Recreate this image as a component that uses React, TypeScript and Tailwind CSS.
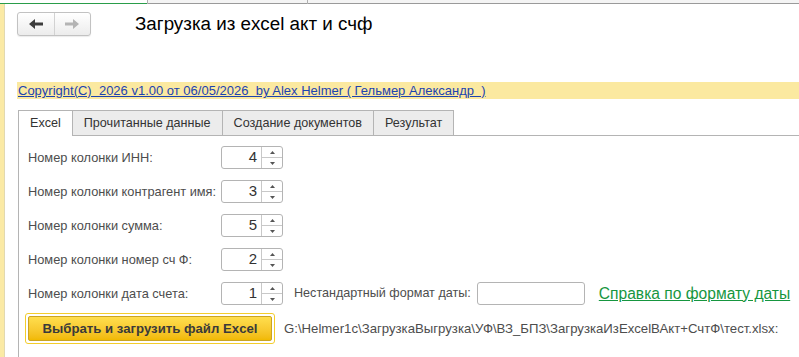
import React from "react";

const rows = [
  { label: "Номер колонки ИНН:", value: "4" },
  { label: "Номер колонки контрагент имя:", value: "3" },
  { label: "Номер колонки сумма:", value: "5" },
  { label: "Номер колонки номер сч Ф:", value: "2" },
];

const tabs = ["Excel", "Прочитанные данные", "Создание документов", "Результат"];

function SpinBox({ value }: { value: string }) {
  return (
    <div className="flex h-[23px] w-[62px] shrink-0 rounded-[3px] border border-[#b4b4b4] bg-white">
      <div className="flex flex-1 items-center justify-end pr-[4px] text-[15px] text-[#333]">{value}</div>
      <div className="flex w-[21px] flex-col border-l border-[#c8c8c8]">
        <div className="flex flex-1 items-center justify-center border-b border-[#c8c8c8]">
          <svg width="5" height="3" viewBox="0 0 5 3"><path d="M2.5 0 L5 3 L0 3 Z" fill="#555" /></svg>
        </div>
        <div className="flex flex-1 items-center justify-center">
          <svg width="5" height="3" viewBox="0 0 5 3"><path d="M0 0 L5 0 L2.5 3 Z" fill="#555" /></svg>
        </div>
      </div>
    </div>
  );
}

export default function App() {
  return (
    <div className="relative flex h-[357px] w-[799px] flex-col overflow-hidden bg-white font-['Liberation_Sans',Arial,sans-serif]">
      {/* верхняя полоска вкладок */}
      <div className="flex h-[4px] shrink-0">
        <div className="w-[147px] border-b border-[#2a9d4a] bg-white" />
        <div className="w-[1px] bg-[#b0b0b0]" />
        <div className="w-[159px] border-b border-[#9a9a9a] bg-[#f4f4f4]" />
        <div className="w-[1px] bg-[#b0b0b0]" />
        <div className="flex-1 border-b border-[#9a9a9a] bg-[#f4f4f4]" />
      </div>

      <div className="flex flex-1">
        <div className="w-[5px] shrink-0 border-r border-[#e2d9b0] bg-[#fbeaa5]" />

        <div className="flex flex-1 flex-col">
          {/* шапка */}
          <div className="ml-[12px] mt-[8px] flex items-center">
            <div className="flex h-[24px] w-[74px] rounded-[3px] border border-[#c2c2c2] bg-gradient-to-b from-white to-[#ececec] shadow-[0_1px_1px_rgba(0,0,0,0.08)]">
              <div className="flex flex-1 items-center justify-center border-r border-[#d2d2d2]">
                <svg width="14" height="10" viewBox="0 0 14 10">
                  <path d="M0 5 L6 0 L6 3.5 L14 3.5 L14 6.5 L6 6.5 L6 10 Z" fill="#3c3c3c" />
                </svg>
              </div>
              <div className="flex flex-1 items-center justify-center">
                <svg width="14" height="10" viewBox="0 0 14 10">
                  <path d="M14 5 L8 0 L8 3.5 L0 3.5 L0 6.5 L8 6.5 L8 10 Z" fill="#b4b4b4" />
                </svg>
              </div>
            </div>
            <div className="ml-[44px] text-[18.8px] leading-[24px] text-black">Загрузка из excel акт и счф</div>
          </div>

          {/* копирайт */}
          <div className="ml-[12px] mt-[46px] flex h-[17px] items-center bg-[#fbe9a0]">
            <span className="whitespace-pre pl-[1px] text-[13px] leading-[17px] text-[#1d43b0] underline">
              Copyright(C)  2026 v1.00 от 06/05/2026  by Alex Helmer ( Гельмер Александр  )
            </span>
          </div>

          {/* вкладки */}
          <div className="ml-[13px] mt-[11px] flex h-[26px]">
            {tabs.map((t, i) => (
              <div
                key={t}
                className={`flex items-center border-t border-r border-[#b4b4b4] px-[11px] text-[12.6px] text-[#333] ${
                  i === 0 ? "border-l bg-white" : "border-b bg-[#ececec]"
                }`}
              >
                {t}
              </div>
            ))}
            <div className="flex-1 border-b border-[#b4b4b4]" />
          </div>

          <div className="ml-[13px] flex flex-1 flex-col border-l border-[#b4b4b4] pl-[9px] pt-[10px]">
            <div className="flex flex-col gap-[11px]">
              {rows.map((r) => (
                <div key={r.label} className="flex h-[23px] items-center">
                  <div className="w-[193px] text-[12.8px] text-[#4d4d4d]">{r.label}</div>
                  <SpinBox value={r.value} />
                </div>
              ))}
              <div className="flex h-[23px] items-center">
                <div className="w-[193px] text-[12.8px] text-[#4d4d4d]">Номер колонки дата счета:</div>
                <SpinBox value="1" />
                <div className="ml-[11px] text-[12.6px] text-[#4d4d4d]">Нестандартный формат даты:</div>
                <div className="ml-[6px] h-[23px] w-[108px] rounded-[3px] border border-[#b4b4b4] bg-white" />
                <span className="ml-[14px] text-[15.6px] text-[#16963f] underline">Справка по формату даты</span>
              </div>
            </div>

            <div className="-ml-[3px] mt-[8px] flex items-center">
              <div className="rounded-[3px] border border-[#f3cd2c] p-[2px]">
                <div className="flex h-[25px] w-[244px] items-center justify-center rounded-[2px] border border-[#c9a424] bg-gradient-to-b from-[#ffde4d] to-[#f1b900] text-[13.2px] font-bold text-[#3a3a3a]">
                  Выбрать и загрузить файл Excel
                </div>
              </div>
              <div className="ml-[9px] text-[13.2px] text-[#4d4d4d]">
                G:\Helmer1c\ЗагрузкаВыгрузка\УФ\ВЗ_БПЗ\ЗагрузкаИзExcelВАкт+СчтФ\тест.xlsx:
              </div>
            </div>
          </div>
        </div>
      </div>
    </div>
  );
}
